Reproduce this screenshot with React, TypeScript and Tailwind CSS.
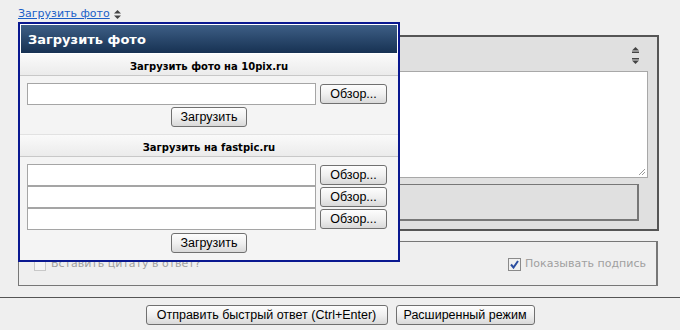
import React from "react";

const btn =
  "h-[20px] rounded-[3px] border border-[#707070] bg-gradient-to-b from-[#fdfdfd] via-[#f0f0f0] to-[#d9d9d9] px-[6px] text-[12.5px] leading-[16px] text-black font-['Liberation_Sans',Arial,sans-serif]";

function FileRow() {
  return (
    <div className="flex items-center gap-[4px] self-start pl-[7px]">
      <div className="h-[22px] w-[289px] border border-[#a5a5a5] bg-white" />
      <button className={`${btn} w-[67px]`}>Обзор...</button>
    </div>
  );
}

function SectionBar({ title }: { title: string }) {
  return (
    <div className="flex h-[22px] items-center justify-center border-b border-[#c8c8c8] bg-gradient-to-b from-[#fafafa] to-[#ebebeb] pt-[3px] text-[10px] font-bold text-black">
      {title}
    </div>
  );
}

function UploadPopup() {
  return (
    <div className="absolute left-[18px] top-[22px] h-[240px] w-[382px] border-2 border-[#0a1890] bg-[#f4f4f4]">
      <div className="border border-white">
        <div className="flex h-[28px] items-center bg-gradient-to-b from-[#3e5f86] to-[#173253] pl-[7px] pt-[1px] text-[13px] font-bold text-white">
          Загрузить фото
        </div>
      </div>
      <SectionBar title="Загрузить фото на 10pix.ru" />
      <div className="flex flex-col items-center pt-[7px] pb-[7px]">
        <FileRow />
        <button className={`${btn} mt-[2px] w-[76px]`}>Загрузить</button>
      </div>
      <div className="border-t border-[#e2e2e2]" />
      <SectionBar title="Загрузить на fastpic.ru" />
      <div className="flex flex-col items-center pt-[7px]">
        <FileRow />
        <FileRow />
        <FileRow />
        <button className={`${btn} mt-[3px] w-[76px]`}>Загрузить</button>
      </div>
    </div>
  );
}

function SortIcon() {
  return (
    <svg width="7" height="9" viewBox="0 0 7 9" className="block shrink-0">
      <path d="M3.5 0 L7 3.5 H0 Z" fill="#444" />
      <path d="M3.5 9 L7 5.5 H0 Z" fill="#444" />
    </svg>
  );
}

function ArrowUp() {
  return (
    <svg width="7" height="6" viewBox="0 0 7 6" className="block shrink-0">
      <path d="M3.5 0 L7 3.5 H0 Z" fill="#444" />
      <rect x="0" y="4.5" width="7" height="1.5" fill="#444" />
    </svg>
  );
}

function ArrowDown() {
  return (
    <svg width="7" height="6" viewBox="0 0 7 6" className="block shrink-0">
      <rect x="0" y="0" width="7" height="1.5" fill="#444" />
      <path d="M0 2.5 H7 L3.5 6 Z" fill="#444" />
    </svg>
  );
}

export default function App() {
  return (
    <div className="relative h-[330px] w-[680px] overflow-hidden bg-[#efefef] font-['DejaVu_Sans',Verdana,sans-serif] text-[11px]">
      <div className="flex h-[35px] items-start gap-[4px] pl-[18px] pt-[6px]">
        <a href="#" className="text-[#1a5fc8] underline">
          Загрузить фото
        </a>
        <span className="pt-[4px]">
          <SortIcon />
        </span>
      </div>

      <div className="ml-[18px] h-[196px] w-[641px] border-t-2 border-r-2 border-b-2 border-[#555] bg-[#e0e0e0]">
        <div className="flex h-[34px] items-center justify-end pr-[18px] pt-[2px]">
          <div className="flex flex-col gap-[5px]">
            <ArrowUp />
            <ArrowDown />
          </div>
        </div>
        <div className="relative ml-[10px] h-[107px] w-[620px] border border-[#a8a8a8] bg-white">
          <svg width="9" height="9" viewBox="0 0 9 9" className="absolute bottom-[1px] right-[1px]">
            <path d="M8 2 L2 8 M8 5 L5 8" stroke="#9a9a9a" strokeWidth="1" />
          </svg>
        </div>
        <div className="ml-[10px] mt-[6px] h-[37px] w-[611px] border border-[#777] border-b-2 border-r-2 bg-[#e0e0e0]" />
      </div>

      <div className="ml-[18px] mt-[10px] flex h-[45px] w-[640px] items-center justify-between border-t border-r-2 border-l border-b border-[#777] pl-[15px] pr-[10px] pt-[2px] text-[#a0a0a0]">
        <label className="flex items-center gap-[5px]">
          <span className="h-[12px] w-[12px] border border-[#c8c8c8] bg-[#f4f4f4]" />
          Вставить цитату в ответ?
        </label>
        <label className="flex items-center gap-[4px]">
          <span className="flex h-[13px] w-[13px] items-center justify-center border border-[#8a8a8a] bg-[#f0f0f0]">
            <svg width="9" height="9" viewBox="0 0 9 9">
              <path d="M1 4.5 L3.5 7.5 L8 1" stroke="#2a4da0" strokeWidth="2" fill="none" />
            </svg>
          </span>
          Показывать подпись
        </label>
      </div>

      <div className="mt-[11px] border-t border-[#555]" />
      <div className="flex justify-center gap-[8px] pt-[7px]">
        <button className={`${btn} w-[242px]`}>Отправить быстрый ответ (Ctrl+Enter)</button>
        <button className={`${btn} w-[139px]`}>Расширенный режим</button>
      </div>

      <UploadPopup />
    </div>
  );
}
